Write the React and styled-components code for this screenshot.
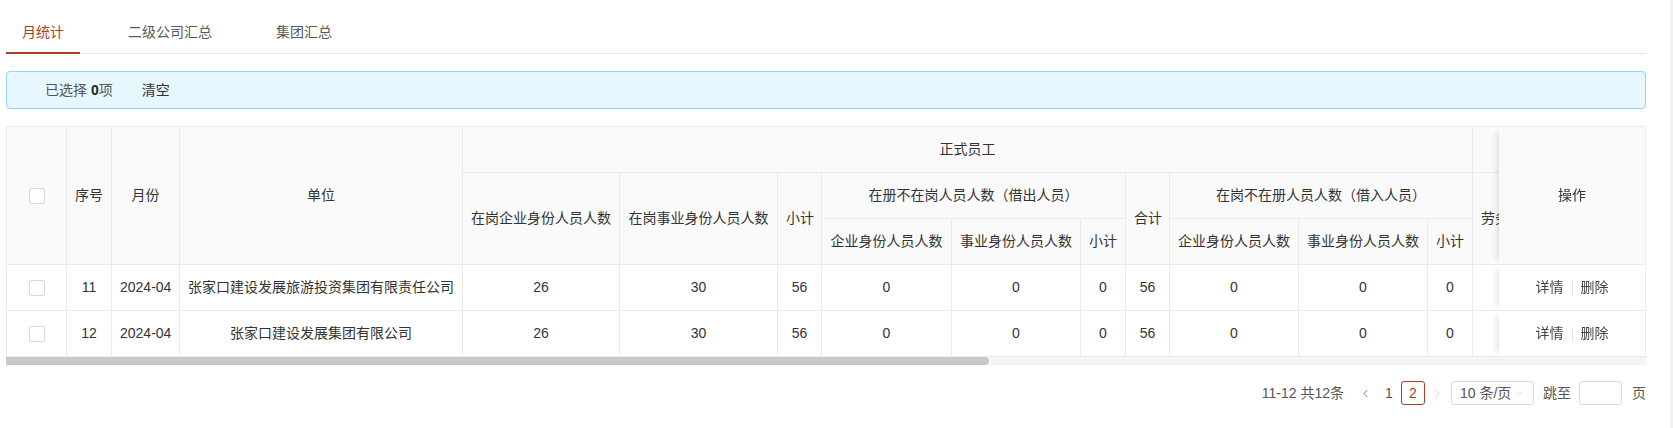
import React from 'react'
import styled, { createGlobalStyle } from 'styled-components'
import { ChevronDown, ChevronLeft, ChevronRight } from 'lucide-react'

const GlobalStyle = createGlobalStyle`
  html, body {
    margin: 0;
    padding: 0;
    background: #fff;
  }
  body {
    font-family: "Liberation Sans", "Noto Sans CJK SC", sans-serif;
    font-size: 14px;
    color: #333;
  }
`

const PRIMARY = '#ad3e29'
const LINE = '#ebebeb'

const Page = styled.div`
  display: flex;
  min-height: 428px;
`

const Main = styled.div`
  width: 1640px;
  margin-left: 6px;
  padding-top: 10px;
`

const Gutter = styled.div`
  width: 3px;
  margin-left: auto;
  background: #f1f1f3;
`

const TabNav = styled.div`
  display: flex;
  border-bottom: 1px solid #e6e6e6;
`

const Tab = styled.div`
  padding: 11px 16px 9px;
  margin-right: 32px;
  margin-bottom: -1px;
  line-height: 22px;
  font-size: 14px;
  color: ${p => (p.$active ? PRIMARY : '#595959')};
  border-bottom: 2px solid ${p => (p.$active ? PRIMARY : 'transparent')};
`

const Alert = styled.div`
  margin-top: 17px;
  height: 38px;
  box-sizing: border-box;
  display: flex;
  align-items: center;
  gap: 29px;
  padding: 0 38px;
  background: #e6f7ff;
  border: 1px solid #91d5ff;
  border-radius: 4px;
  color: #555;
  line-height: 20px;
  b {
    color: #222;
    margin-left: 4px;
  }
`

const ClearLink = styled.span`
  color: #333;
`

const TableBox = styled.div`
  margin-top: 17px;
  width: 1640px;
  overflow: hidden;
  border-top: 1px solid ${LINE};
`

const Table = styled.table`
  table-layout: fixed;
  border-collapse: separate;
  border-spacing: 0;
  width: ${p => p.$width}px;
`

const Th = styled.th`
  background: #fafafa;
  font-weight: 400;
  color: #333;
  line-height: 21px;
  padding: 12px 8px;
  border-right: 1px solid ${LINE};
  border-bottom: 1px solid ${LINE};
  border-left: ${p => (p.$first ? `1px solid ${LINE}` : 'none')};
  white-space: nowrap;
  overflow: hidden;
  text-align: ${p => (p.$left ? 'left' : 'center')};
`

const FixedTh = styled(Th)`
  position: sticky;
  right: 0;
  z-index: 2;
  box-shadow: -7px 0 7px -5px rgba(0, 0, 0, 0.12);
`

const Td = styled.td`
  background: #fff;
  color: #333;
  text-align: center;
  line-height: 21px;
  padding: 12px 8px;
  border-right: 1px solid ${LINE};
  border-bottom: 1px solid ${LINE};
  border-left: ${p => (p.$first ? `1px solid ${LINE}` : 'none')};
  white-space: nowrap;
  overflow: hidden;
`

const FixedTd = styled(Td)`
  position: sticky;
  right: 0;
  z-index: 2;
  box-shadow: -7px 0 7px -5px rgba(0, 0, 0, 0.12);
`

const Check = styled.span`
  display: inline-block;
  width: 16px;
  height: 16px;
  box-sizing: border-box;
  border: 1px solid #d9d9d9;
  border-radius: 2px;
  background: #fff;
  vertical-align: middle;
`

const Actions = styled.div`
  display: flex;
  justify-content: center;
  align-items: center;
  color: #444;
`

const Divider = styled.span`
  width: 1px;
  height: 14px;
  background: #e4e4e4;
  margin: 0 8px;
`

const ScrollTrack = styled.div`
  height: 8px;
  background: #f4f4f4;
  display: flex;
`

const ScrollThumb = styled.div`
  height: 8px;
  background: #c9c9c9;
  border-radius: 0 4px 4px 0;
`

const Pager = styled.div`
  display: flex;
  justify-content: flex-end;
  align-items: center;
  margin-top: 16px;
  color: #555;
  line-height: 22px;
`

const Total = styled.span`
  margin-right: 9px;
`

const PageItem = styled.span`
  width: 24px;
  height: 24px;
  box-sizing: border-box;
  display: inline-flex;
  align-items: center;
  justify-content: center;
  border: 1px solid ${p => (p.$active ? PRIMARY : 'transparent')};
  border-radius: 3px;
  color: ${p => (p.$active ? PRIMARY : p.$disabled ? '#c4c4c4' : '#555')};
`

const SizeSelect = styled.div`
  margin-left: 2px;
  width: 83px;
  height: 24px;
  box-sizing: border-box;
  border: 1px solid #d9d9d9;
  border-radius: 3px;
  display: flex;
  align-items: center;
  justify-content: space-between;
  padding: 0 8px 0 8px;
  color: #555;
`

const JumpLabel = styled.span`
  margin-left: 9px;
`

const JumpInput = styled.div`
  margin-left: 8px;
  width: 43px;
  height: 24px;
  box-sizing: border-box;
  border: 1px solid #d9d9d9;
  border-radius: 3px;
`

const PageUnit = styled.span`
  margin-left: 10px;
`

const colWidths = [61, 45, 68, 283, 157, 158, 44, 130, 129, 45, 44, 129, 129, 45, 187, 187, 187, 187, 187, 187, 147]
const tableWidth = colWidths.reduce((a, b) => a + b, 0)

const rows = [
  { no: 11, month: '2024-04', unit: '张家口建设发展旅游投资集团有限责任公司' },
  { no: 12, month: '2024-04', unit: '张家口建设发展集团有限公司' },
]

const values = [26, 30, 56, 0, 0, 0, 56, 0, 0, 0, 0, 0, 0, 0, 0, 0]

export default function App() {
  const thumb = Math.round((1640 * 1640) / tableWidth)
  return (
    <Page>
      <GlobalStyle />
      <Main>
        <TabNav>
          <Tab $active>月统计</Tab>
          <Tab>二级公司汇总</Tab>
          <Tab>集团汇总</Tab>
        </TabNav>

        <Alert>
          <span>已选择<b>0</b>项</span>
          <ClearLink>清空</ClearLink>
        </Alert>

        <TableBox>
          <Table $width={tableWidth}>
            <colgroup>
              {colWidths.map((w, i) => (
                <col key={i} style={{ width: w }} />
              ))}
            </colgroup>
            <thead>
              <tr>
                <Th rowSpan={3} $first><Check /></Th>
                <Th rowSpan={3}>序号</Th>
                <Th rowSpan={3}>月份</Th>
                <Th rowSpan={3}>单位</Th>
                <Th colSpan={10}>正式员工</Th>
                <Th colSpan={6}>劳务派遣及其他用工</Th>
                <FixedTh rowSpan={3}>操作</FixedTh>
              </tr>
              <tr>
                <Th rowSpan={2}>在岗企业身份人员人数</Th>
                <Th rowSpan={2}>在岗事业身份人员人数</Th>
                <Th rowSpan={2}>小计</Th>
                <Th colSpan={3}>在册不在岗人员人数（借出人员）</Th>
                <Th rowSpan={2}>合计</Th>
                <Th colSpan={3}>在岗不在册人员人数（借入人员）</Th>
                <Th rowSpan={2} $left>劳务派遣人数</Th>
                <Th rowSpan={2}>其他用工人数</Th>
                <Th rowSpan={2}>小计</Th>
                <Th rowSpan={2}>退休返聘人数</Th>
                <Th rowSpan={2}>实习人数</Th>
                <Th rowSpan={2}>总计</Th>
              </tr>
              <tr>
                <Th>企业身份人员人数</Th>
                <Th>事业身份人员人数</Th>
                <Th>小计</Th>
                <Th>企业身份人员人数</Th>
                <Th>事业身份人员人数</Th>
                <Th>小计</Th>
              </tr>
            </thead>
            <tbody>
              {rows.map(r => (
                <tr key={r.no}>
                  <Td $first><Check /></Td>
                  <Td>{r.no}</Td>
                  <Td>{r.month}</Td>
                  <Td>{r.unit}</Td>
                  {values.map((v, i) => (
                    <Td key={i}>{v}</Td>
                  ))}
                  <FixedTd>
                    <Actions>
                      <span>详情</span>
                      <Divider />
                      <span>删除</span>
                    </Actions>
                  </FixedTd>
                </tr>
              ))}
            </tbody>
          </Table>
        </TableBox>
        <ScrollTrack>
          <ScrollThumb style={{ width: thumb }} />
        </ScrollTrack>

        <Pager>
          <Total>11-12 共12条</Total>
          <PageItem><ChevronLeft size={13} strokeWidth={1.5} /></PageItem>
          <PageItem>1</PageItem>
          <PageItem $active>2</PageItem>
          <PageItem $disabled><ChevronRight size={13} strokeWidth={1.5} /></PageItem>
          <SizeSelect>
            <span>10 条/页</span>
            <ChevronDown size={12} strokeWidth={1.2} color="#bfbfbf" />
          </SizeSelect>
          <JumpLabel>跳至</JumpLabel>
          <JumpInput />
          <PageUnit>页</PageUnit>
        </Pager>
      </Main>
      <Gutter />
    </Page>
  )
}
